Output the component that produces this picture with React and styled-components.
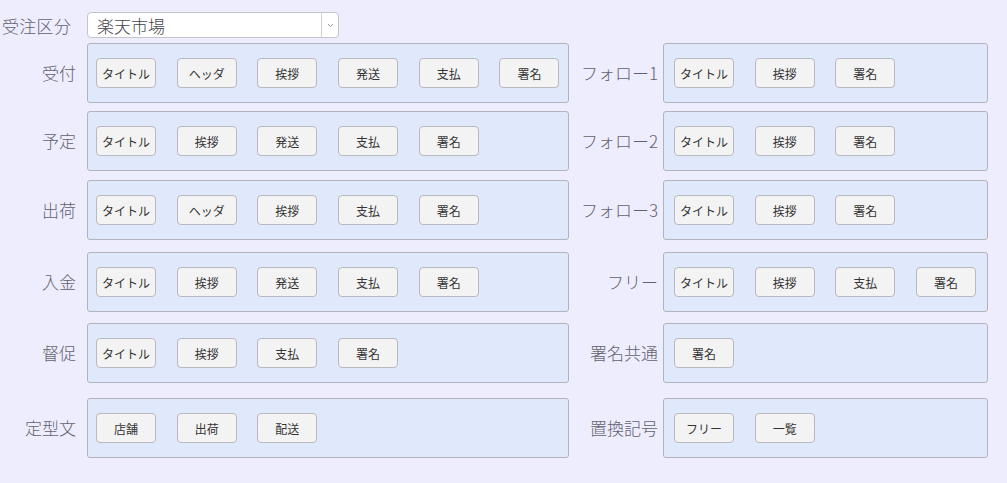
import { createGlobalStyle, styled } from "styled-components";

const GlobalStyle = createGlobalStyle`
  html, body {
    margin: 0;
    padding: 0;
    background: #eeedfd;
  }
  body {
    font-family: "Noto Sans CJK JP", "Noto Sans", sans-serif;
  }
`;

const Page = styled.div`
  width: 1007px;
  height: 483px;
  padding-top: 12px;
  box-sizing: border-box;
  background: #eeedfd;
`;

const TopRow = styled.div`
  display: flex;
  align-items: center;
  gap: 11px;
`;

const TopLabel = styled.div`
  width: 76px;
  padding-left: 2px;
  box-sizing: border-box;
  font-size: 17px;
  font-weight: 300;
  color: #62626e;
  white-space: nowrap;
  letter-spacing: 0.3px;
`;

const SelectBox = styled.div`
  width: 252px;
  height: 26px;
  box-sizing: border-box;
  background: #fff;
  border: 1px solid #c4c4cc;
  border-radius: 4px;
  display: flex;
  align-items: center;
`;

const SelectText = styled.div`
  flex: 1;
  padding-left: 9px;
  font-size: 17px;
  font-weight: 300;
  color: #44444c;
`;

const SelectArrow = styled.div`
  width: 16px;
  height: 100%;
  border-left: 1px solid #d0d0d6;
  display: flex;
  align-items: center;
  justify-content: center;
`;

const Row = styled.div`
  display: flex;
  margin-top: ${(p) => p.$top}px;
`;

const Group = styled.div`
  display: flex;
  align-items: center;
  gap: ${(p) => p.$gap}px;
  margin-left: ${(p) => p.$left}px;
`;

const Label = styled.div`
  flex: none;
  width: ${(p) => p.$width}px;
  text-align: right;
  font-size: 17px;
  font-weight: 300;
  color: #62626e;
  white-space: nowrap;
  margin-top: -2px;
`;

const Panel = styled.div`
  flex: none;
  width: ${(p) => p.$width}px;
  height: 60px;
  box-sizing: border-box;
  background: #e0e8fb;
  border: 1px solid #b3b3bb;
  border-radius: 3px;
  padding: 0 ${(p) => p.$pad}px;
  display: flex;
  align-items: center;
  gap: 20.7px;
`;

const Btn = styled.button`
  width: 60px;
  height: 30px;
  flex: none;
  box-sizing: border-box;
  background: #f3f3f3;
  border: 1px solid #b9b9bf;
  border-radius: 4px;
  font-family: "Noto Sans CJK JP", sans-serif;
  font-size: 12px;
  color: #333;
  padding: 0;
  cursor: pointer;
`;

const rows = [
  {
    top: 5,
    left: ["受付", ["タイトル", "ヘッダ", "挨拶", "発送", "支払", "署名"]],
    right: ["フォロー1", ["タイトル", "挨拶", "署名"]],
  },
  {
    top: 8,
    left: ["予定", ["タイトル", "挨拶", "発送", "支払", "署名"]],
    right: ["フォロー2", ["タイトル", "挨拶", "署名"]],
  },
  {
    top: 9,
    left: ["出荷", ["タイトル", "ヘッダ", "挨拶", "支払", "署名"]],
    right: ["フォロー3", ["タイトル", "挨拶", "署名"]],
  },
  {
    top: 12,
    left: ["入金", ["タイトル", "挨拶", "発送", "支払", "署名"]],
    right: ["フリー", ["タイトル", "挨拶", "支払", "署名"]],
  },
  {
    top: 11,
    left: ["督促", ["タイトル", "挨拶", "支払", "署名"]],
    right: ["署名共通", ["署名"]],
  },
  {
    top: 15,
    left: ["定型文", ["店舗", "出荷", "配送"]],
    right: ["置換記号", ["フリー", "一覧"]],
  },
];

export default function App() {
  return (
    <Page>
      <GlobalStyle />
      <TopRow>
        <TopLabel>受注区分</TopLabel>
        <SelectBox>
          <SelectText>楽天市場</SelectText>
          <SelectArrow>
            <svg width="7" height="5" viewBox="0 0 7 5">
              <path d="M1 1 L3.5 3.5 L6 1" fill="none" stroke="#999" strokeWidth="1" />
            </svg>
          </SelectArrow>
        </SelectBox>
      </TopRow>
      {rows.map((r, i) => (
        <Row key={i} $top={r.top}>
          <Group $gap={11} $left={0}>
            <Label $width={76}>{r.left[0]}</Label>
            <Panel $width={482} $pad={8}>
              {r.left[1].map((b, j) => (
                <Btn key={j}>{b}</Btn>
              ))}
            </Panel>
          </Group>
          <Group $gap={5} $left={9}>
            <Label $width={80}>{r.right[0]}</Label>
            <Panel $width={325} $pad={10}>
              {r.right[1].map((b, j) => (
                <Btn key={j}>{b}</Btn>
              ))}
            </Panel>
          </Group>
        </Row>
      ))}
    </Page>
  );
}
